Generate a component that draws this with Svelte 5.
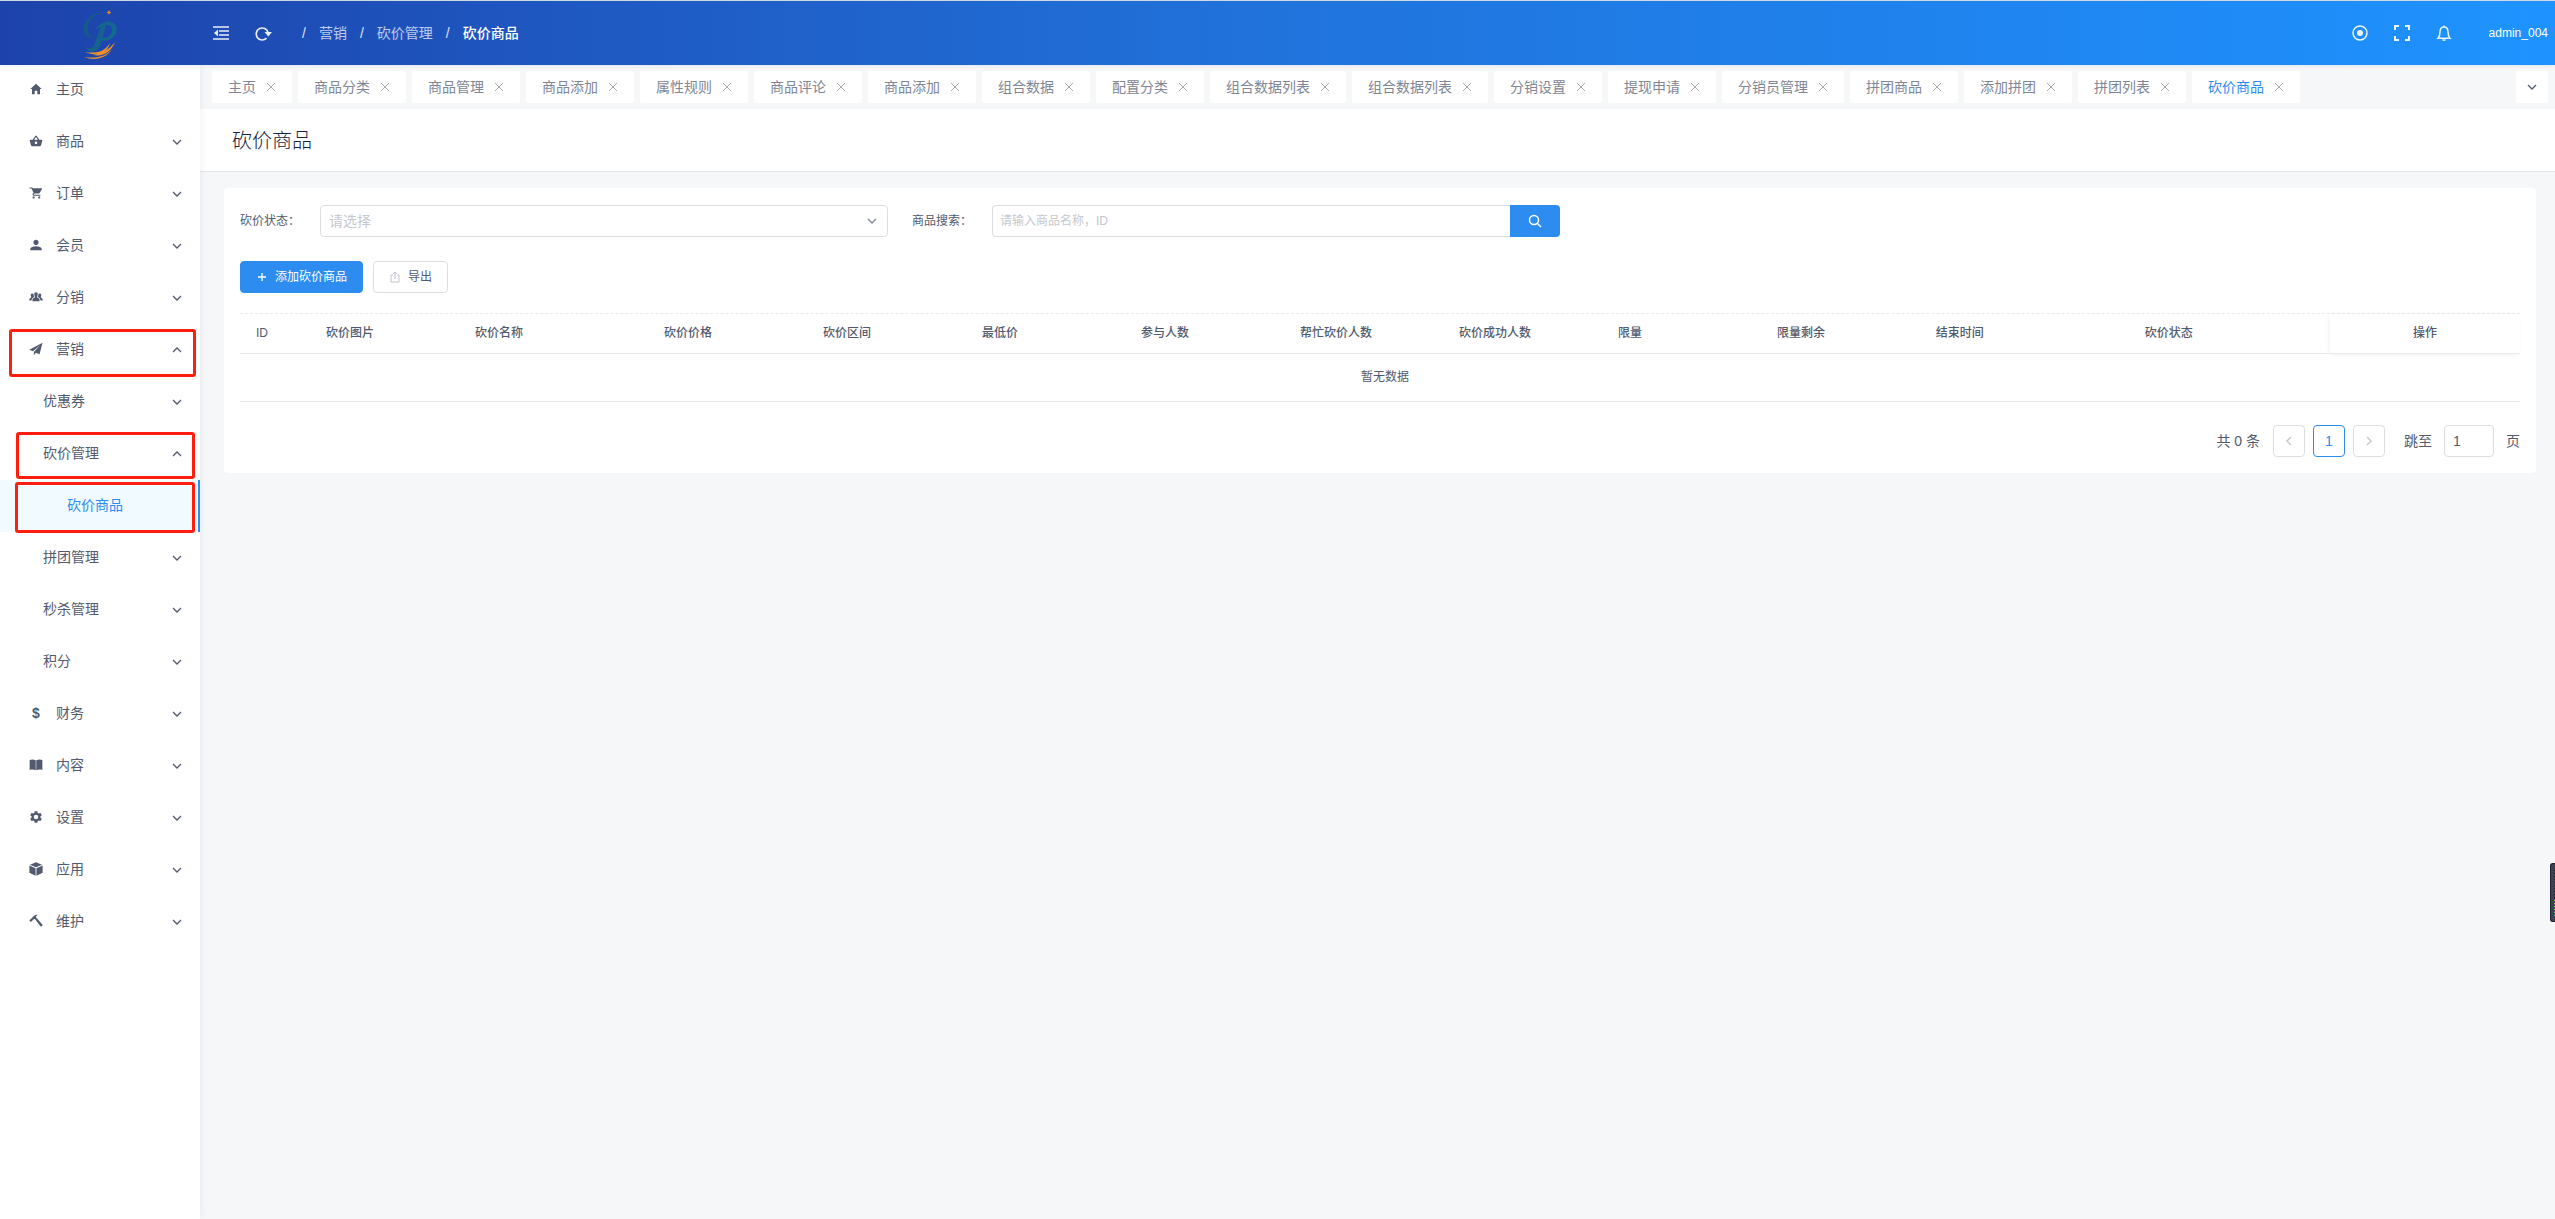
<script>
  const tabs = [
    '主页', '商品分类', '商品管理', '商品添加', '属性规则', '商品评论', '商品添加', '组合数据', '配置分类',
    '组合数据列表', '组合数据列表', '分销设置', '提现申请', '分销员管理', '拼团商品', '添加拼团', '拼团列表', '砍价商品'
  ];

  const menu = [
    { label: '主页', icon: 'home' },
    { label: '商品', icon: 'basket', arrow: 'down' },
    { label: '订单', icon: 'cart', arrow: 'down' },
    { label: '会员', icon: 'person', arrow: 'down' },
    { label: '分销', icon: 'people', arrow: 'down' },
    { label: '营销', icon: 'plane', arrow: 'up', mark: 'mark-a' },
    { label: '优惠券', level: 2, arrow: 'down' },
    { label: '砍价管理', level: 2, arrow: 'up', mark: 'mark-b' },
    { label: '砍价商品', level: 3, active: true, mark: 'mark-c' },
    { label: '拼团管理', level: 2, arrow: 'down' },
    { label: '秒杀管理', level: 2, arrow: 'down' },
    { label: '积分', level: 2, arrow: 'down' },
    { label: '财务', icon: 'dollar', arrow: 'down' },
    { label: '内容', icon: 'book', arrow: 'down' },
    { label: '设置', icon: 'gear', arrow: 'down' },
    { label: '应用', icon: 'cube', arrow: 'down' },
    { label: '维护', icon: 'hammer', arrow: 'down' }
  ];

  const icons = {
    home: 'M208 448V320h96v128h97.600V256H464L256 64 48 256h62.400v192z',
    basket:
      'M40 208h92L228 76q28-34 56 0l96 132h92q16 0 14 18l-40 180q-8 42-48 42H114q-40 0-48-42L26 226q-2-18 14-18zM186 208h140L256 112zM256 276a48 48 0 1 0 0 96 48 48 0 1 0 0-96z',
    cart:
      'M169.600 377.600a41.600 41.600 0 1 0 .1 0zM20 51.200v41.600h69.600l74.900 151.700-31.300 51c-3.100 5.200-5.200 12.400-5.200 19.700 0 27.800 19 41.600 44.800 41.600H416v-40H178c-3.100 0-5.200-2.100-5.200-5.200l23-38h155c15.600 0 29.100-8.300 36.400-21.800l90-140c1.200-2.500 2-6.200 2-10.400 0-11.400-9.300-19.700-20.800-19.700H135.400L115.600 51.200zM374.400 377.600a41.600 41.600 0 1 0 .1 0z',
    person:
      'M256 256c52.800 0 96-43.200 96-96s-43.200-96-96-96-96 43.200-96 96 43.200 96 96 96zm0 48c-63.600 0-208 32.400-208 96v48h416v-48c0-63.600-144.400-96-208-96z',
    people:
      'M256 84c44 0 66 32 62 78-3 40-18 68-24 88-4 20 10 36 40 46 40 14 54 40 54 112H124c0-72 14-98 54-112 30-10 44-26 40-46-6-20-21-48-24-88-4-46 18-78 62-78zM120 124c28 0 44 14 48 36 4 40 16 64 24 92-54 18-92 50-98 128H10c0-60 10-78 44-92 24-10 30-22 26-36-6-18-18-40-18-72 0-36 22-56 58-56zM392 124c-28 0-44 14-48 36-4 40-16 64-24 92 54 18 92 50 98 128h84c0-60-10-78-44-92-24-10-30-22-26-36 6-18 18-40 18-72 0-36-22-56-58-56z',
    plane:
      'M496 28L12 286l130 52L420 110 184 356l-12 128 84-92 130 58z',
    book:
      'M24 76c60-36 160-30 222 8v366c-62-30-160-36-222-8zM488 76c-60-36-160-30-222 8v366c62-30 160-36 222-8z',
    gear:
      'M414.600 276.900c.9-6.800 1.400-13.700 1.400-20.900s-.6-14.100-1.400-20.900l45-35.200c4-3.200 5.200-8.900 2.600-13.700l-42.700-73.800c-2.600-4.700-8.300-6.400-13-4.700l-53.100 21.300c-11.100-8.500-23-15.600-36-20.900l-8.100-56.500c-.7-5.100-5.200-9.200-10.500-9.200h-85.400c-5.300 0-9.800 4-10.500 9.200l-8.100 56.500c-13 5.300-25 12.600-36 20.900L105.700 107.700c-4.900-1.900-10.500 0-13 4.700L50 186.200c-2.700 4.700-1.500 10.500 2.600 13.700l45 35.200c-.9 6.800-1.500 13.900-1.500 20.900s.6 14.100 1.500 20.900l-45 35.200c-4.100 3.200-5.200 9-2.600 13.700l42.700 73.800c2.600 4.700 8.300 6.400 13 4.700l53.100-21.300c11.100 8.500 23 15.600 36 20.900l8.100 56.500c.7 5.100 5.200 9.200 10.500 9.200h85.400c5.300 0 9.800-4 10.500-9.200l8.100-56.500c13-5.300 25-12.600 36-20.900l53.100 21.300c4.900 1.900 10.500 0 13-4.700l42.700-73.800c2.600-4.700 1.500-10.500-2.600-13.700zM256 338a82 82 0 1 1 0-164 82 82 0 0 1 0 164z',
    cube:
      'M256 12L36 96l220 92 220-92zM14 130v262l226 108V224zM498 130v262L272 500V224z',
    hammer:
      'M12 236L186 62q60-50 124-34l-66 78 36 40 214 244q10 40-34 62-26 8-46-12L222 192l-28-20L66 290z'
  };

  const columns = [
    ['ID', 70], ['砍价图片', 149], ['砍价名称', 189], ['砍价价格', 159], ['砍价区间', 159], ['最低价', 159],
    ['参与人数', 159], ['帮忙砍价人数', 159], ['砍价成功人数', 159], ['限量', 159], ['限量剩余', 159],
    ['结束时间', 209], ['砍价状态', 201], ['操作', 190]
  ];
  const total = columns.reduce((sum, c) => sum + c[1], 0);

  let keyword = $state('');
  let page = $state('1');
</script>

{#snippet chevron(dir)}
  <svg class="chevron" class:up={dir === 'up'} viewBox="0 0 10 10" aria-hidden="true"><path d="M1 3l4 4 4-4" /></svg>
{/snippet}

<header class="topbar">
  <a class="brand" href="#home" aria-label="首页">
    <svg viewBox="0 0 40 54" aria-hidden="true">
      <path d="M25 6C12 6 3 15 3.500 24c.5 6 5 9 12 7-5 0-8-3-8-9C8 14 15 8 25 6z" fill="#175a8c" />
      <path d="M15 24c3-5 9-9 15-8 6 1 8 6 6 11-2 6-9 9-17 7l2-2c6 1 10-2 11-7 1-4-1-6-5-6-5 0-8 2-12 5z" fill="#126a90" />
      <path d="M23 17l5-3c-4 10-5 19-8 26-3 7-10 9-16 0 5 4 9 3 11-3 3-8 4-14 8-20z" fill="#15638e" />
      <path d="M5 46c13 2 20-1 25-9-3 11-13 14-25 9zM13 49c9-1 16-5 22-13-4 10-12 15-22 13zM4 51c14 2 22-1 28-8-6 10-18 12-28 8z" fill="#f09128" />
      <path d="M29 4l.8 1.700L31.500 6.500l-1.700.8L29 9l-.8-1.700-1.700-.8 1.700-.8z" fill="#f08a20" />
    </svg>
  </a>
  <button class="tool" aria-label="折叠菜单">
    <svg viewBox="0 0 16 16" aria-hidden="true"><path d="M0 2h16M6 6h10M6 10h10M0 14h16" stroke-width="1.600" /><path class="solid" d="M5 4.500v7L1 8z" /></svg>
  </button>
  <button class="tool" aria-label="刷新">
    <svg viewBox="0 0 16 16" aria-hidden="true"><path d="M11.500 13.200A6 6 0 1 1 13 7.500" stroke-width="1.700" /><path class="solid" d="M9.500 7H17l-3.600 4.500z" /></svg>
  </button>
  <nav class="crumbs" aria-label="面包屑">
    <span>/</span><a href="#marketing">营销</a><span>/</span><a href="#bargain">砍价管理</a><span>/</span><strong>砍价商品</strong>
  </nav>
  <div class="right">
    <button class="tool" aria-label="搜索">
      <svg viewBox="0 0 16 16" aria-hidden="true"><circle cx="8" cy="8" r="7" stroke-width="1.500" /><circle class="solid" cx="8" cy="8" r="3" /></svg>
    </button>
    <button class="tool" aria-label="全屏">
      <svg viewBox="0 0 16 16" aria-hidden="true"><path d="M1 5V1h4M11 1h4v4M15 11v4h-4M5 15H1v-4" stroke-width="2" /></svg>
    </button>
    <button class="tool" aria-label="通知">
      <svg viewBox="0 0 16 16" aria-hidden="true"><path d="M2 13.200h12c-1.500-1.500-2-3-2-6.200C12 4 10.500 2 8 2S4 4 4 7c0 3.200-.5 4.700-2 6.200zM8 .5V2M6.500 14.500q1.500 1.500 3 0" stroke-width="1.500" /></svg>
    </button>
    <a class="user" href="#user">admin_004</a>
  </div>
</header>

<div class="layout">
  <aside class="side">
    <ul>
      {#each menu as item}
        <li class:sub={item.level === 2} class:leaf={item.level === 3} class:active={item.active}>
          <a href="#menu">
            {#if item.icon === 'dollar'}
              <span class="glyph" aria-hidden="true">$</span>
            {:else if item.icon}
              <svg class="icon" viewBox="0 0 512 512" aria-hidden="true"><path fill-rule="evenodd" d={icons[item.icon]} /></svg>
            {/if}
            <span>{item.label}</span>
            {#if item.arrow}{@render chevron(item.arrow)}{/if}
          </a>
          {#if item.mark}<i class="mark {item.mark}"></i>{/if}
        </li>
      {/each}
    </ul>
  </aside>

  <main>
    <div class="tabs">
      {#each tabs as tab, i}
        <div class="tab" class:current={i === tabs.length - 1}>
          <a href="#tab">{tab}</a>
          <button aria-label="关闭{tab}"><svg viewBox="0 0 10 10" aria-hidden="true"><path d="M1 1l8 8M9 1l-8 8" /></svg></button>
        </div>
      {/each}
      <button class="more" aria-label="更多标签">{@render chevron('down')}</button>
    </div>

    <div class="title"><h1>砍价商品</h1></div>

    <section class="card">
      <form class="filters" onsubmit={(e) => e.preventDefault()}>
        <div class="field">
          <label for="state">砍价状态：</label>
          <div class="select">
            <select id="state"><option>请选择</option></select>
            {@render chevron('down')}
          </div>
        </div>
        <div class="field">
          <label for="keyword">商品搜索：</label>
          <div class="search">
            <input id="keyword" type="text" placeholder="请输入商品名称，ID" bind:value={keyword} />
            <button aria-label="查询">
              <svg viewBox="0 0 14 14" aria-hidden="true"><circle cx="6" cy="6" r="4.500" /><path d="M9 9l4 4" /></svg>
            </button>
          </div>
        </div>
      </form>

      <div class="actions">
        <button class="primary"><svg viewBox="0 0 10 10" aria-hidden="true"><path d="M5 1v8M1 5h8" /></svg>添加砍价商品</button>
        <button class="plain"><svg viewBox="0 0 10 12" aria-hidden="true"><path d="M3 4H1v7h8V4H7M5 8V1M3 3l2-2 2 2" /></svg>导出</button>
      </div>

      <div class="table">
        <table>
          <colgroup>
            {#each columns as col}<col style="width: {(col[1] / total) * 100}%" />{/each}
          </colgroup>
          <thead>
            <tr>{#each columns as col}<th scope="col">{col[0]}</th>{/each}</tr>
          </thead>
          <tbody>
            <tr><td colspan={columns.length}>暂无数据</td></tr>
          </tbody>
        </table>
      </div>

      <nav class="pager" aria-label="分页">
        <span class="count">共 0 条</span>
        <button disabled aria-label="上一页"><svg viewBox="0 0 8 10" aria-hidden="true"><path d="M6 1L2 5l4 4" /></svg></button>
        <button class="now">1</button>
        <button disabled aria-label="下一页"><svg viewBox="0 0 8 10" aria-hidden="true"><path d="M2 1l4 4-4 4" /></svg></button>
        <label for="page">跳至</label>
        <input id="page" type="text" bind:value={page} />
        <span>页</span>
      </nav>
    </section>
  </main>
</div>

<div class="meter" aria-hidden="true"></div>

<style>
  :global(body) {
    background: #f5f7f9;
    color: #515a6e;
    font: 14px/20px 'Liberation Sans', 'Noto Sans CJK SC', sans-serif;
  }
  :global(#app) {
    display: flex;
    flex-direction: column;
    min-height: 100vh;
  }
  * {
    box-sizing: border-box;
  }
  a {
    color: inherit;
    text-decoration: none;
  }
  button,
  input,
  select {
    margin: 0;
    padding: 0;
    border: 0;
    background: none;
    color: inherit;
    font: inherit;
  }
  svg {
    display: block;
    fill: none;
    stroke: currentColor;
  }

  .topbar {
    position: relative;
    z-index: 2;
    display: flex;
    align-items: center;
    height: 65px;
    padding-right: 7px;
    border-top: 1px solid #cfd9e2;
    background: linear-gradient(90deg, #1d42ab, #2173dc, #1e93ff);
    background-origin: border-box;
    background-clip: padding-box;
    box-shadow: 0 1px 4px rgba(0, 21, 41, 0.08);
    color: #fff;
  }
  .brand {
    width: 200px;
    padding-left: 80px;
  }
  .brand svg {
    width: 40px;
    height: 54px;
    stroke: none;
  }
  .tool {
    display: flex;
    align-items: center;
    justify-content: center;
    width: 42px;
    height: 64px;
    opacity: 0.9;
  }
  .tool svg {
    width: 16px;
    height: 16px;
    overflow: visible;
  }
  .solid {
    fill: currentColor;
    stroke: none;
  }
  .crumbs {
    display: flex;
    gap: 13px;
    margin-left: 18px;
  }
  .crumbs a,
  .crumbs span {
    opacity: 0.7;
  }
  .crumbs span {
    opacity: 0.85;
  }
  .crumbs strong {
    font-weight: 500;
  }
  .right {
    display: flex;
    align-items: center;
    margin-left: auto;
  }
  .user {
    margin-left: 24px;
    font-size: 12px;
    font-weight: 500;
  }

  .layout {
    display: flex;
    flex: 1;
  }
  .side {
    position: relative;
    z-index: 1;
    flex: none;
    width: 200px;
    background: #fff;
    box-shadow: 2px 0 8px rgba(29, 35, 41, 0.05);
  }
  ul {
    margin: -1px 0 0;
    padding: 0;
    list-style: none;
  }
  li {
    position: relative;
  }
  li a {
    display: flex;
    align-items: center;
    height: 52px;
    padding: 0 18px 3px 29px;
  }
  .sub a {
    padding-left: 43px;
  }
  .leaf a {
    padding-left: 67px;
  }
  .active a {
    border-right: 2px solid #2d8cf0;
    background: #f0faff;
    color: #2d8cf0;
  }
  .icon,
  .glyph {
    width: 14px;
    margin-right: 13px;
    font-weight: 700;
    text-align: center;
  }
  .icon {
    height: 14px;
    fill: currentColor;
    stroke: none;
  }
  .chevron {
    width: 10px;
    height: 10px;
    stroke-width: 1.3;
  }
  .chevron.up {
    transform: rotate(180deg);
  }
  li .chevron {
    margin: 3px 0 0 auto;
  }
  .mark {
    position: absolute;
    border: 3px solid #ff1d0d;
    border-radius: 3px;
  }
  .mark-a {
    inset: 5px 4px -1px 9px;
  }
  .mark-b {
    inset: 4px 5px 1px 16px;
  }
  .mark-c {
    inset: 2px 5px -1px 15px;
  }

  main {
    flex: 1;
    min-width: 0;
  }
  .tabs {
    display: flex;
    gap: 6px;
    padding: 6px 7px 6px 12px;
  }
  .tab {
    display: flex;
    align-items: center;
    height: 32px;
    padding: 0 16px;
    border-radius: 3px;
    background: #fff;
    color: #808695;
    white-space: nowrap;
  }
  .tab button {
    margin-left: 10px;
    color: #aaa;
  }
  .tab svg {
    width: 10px;
    height: 10px;
  }
  .tab.current a {
    color: #2d8cf0;
  }
  .more {
    display: flex;
    align-items: center;
    justify-content: center;
    width: 32px;
    height: 32px;
    margin-left: auto;
    border-radius: 3px;
    background: #fff;
  }
  .title {
    padding: 17px 32px 15px;
    border-bottom: 1px solid #e3e6ea;
    background: #fff;
  }
  h1 {
    margin: 0;
    color: #17233d;
    font-size: 20px;
    font-weight: 300;
    line-height: 30px;
  }

  .card {
    margin: 16px 19px 0 24px;
    padding: 17px 16px 16px;
    border-radius: 4px;
    background: #fff;
    font-size: 12px;
  }
  .filters {
    display: grid;
    grid-template-columns: repeat(24, 1fr);
    margin: 0 -12px;
  }
  .field {
    display: flex;
    align-items: center;
    grid-column: span 7;
    padding: 0 12px;
  }
  .field label {
    flex: none;
    width: 80px;
  }
  .select {
    display: grid;
    flex: 1;
    align-items: center;
  }
  .select > :global(*) {
    grid-area: 1 / 1;
  }
  select {
    appearance: none;
    width: 100%;
    height: 32px;
    padding: 0 8px;
    border: 1px solid #dcdee2;
    border-radius: 4px;
    color: #c5c8ce;
    font-size: 14px;
  }
  .select .chevron {
    justify-self: end;
    margin-right: 11px;
    color: #808695;
    pointer-events: none;
  }
  .search {
    display: flex;
    flex: 1;
  }
  .search input {
    flex: 1;
    height: 32px;
    padding: 0 7px;
    border: 1px solid #dcdee2;
    border-right: 0;
    border-radius: 4px 0 0 4px;
  }
  .search input::placeholder {
    color: #c5c8ce;
  }
  .search button {
    display: flex;
    align-items: center;
    justify-content: center;
    width: 50px;
    border-radius: 0 4px 4px 0;
    background: #2d8cf0;
    color: #fff;
  }
  .search svg {
    width: 14px;
    height: 14px;
    stroke-width: 1.5;
  }
  .actions {
    display: flex;
    gap: 10px;
    margin: 24px 0 20px;
  }
  .actions button {
    display: flex;
    align-items: center;
    height: 32px;
    padding: 0 15px;
    border: 1px solid #dcdee2;
    border-radius: 4px;
  }
  .actions svg {
    width: 10px;
    height: 10px;
    margin: 0 8px 0 1px;
  }
  .actions .primary {
    border-color: #2d8cf0;
    background: #2d8cf0;
    color: #fff;
  }
  .primary svg {
    stroke-width: 1.3;
  }
  .plain path {
    stroke: #bfc3ca;
  }
  .actions .plain svg {
    height: 12px;
  }

  .table {
    border-top: 1px dashed #e8eaec;
  }
  table {
    width: 100%;
    border-spacing: 0;
    table-layout: fixed;
  }
  th {
    height: 40px;
    padding: 0 16px 2px;
    border-bottom: 1px solid #e8eaec;
    font-weight: 500;
    text-align: left;
    white-space: nowrap;
  }
  th:last-child {
    box-shadow: -2px 0 6px -2px rgba(0, 0, 0, 0.08), 0 3px 6px -3px rgba(0, 0, 0, 0.06);
    text-align: center;
  }
  td {
    height: 48px;
    padding: 0 0 2px 10px;
    border-bottom: 1px solid #e8eaec;
    text-align: center;
  }

  .pager {
    display: flex;
    align-items: center;
    justify-content: flex-end;
    gap: 8px;
    margin-top: 23px;
    font-size: 14px;
  }
  .count {
    margin-right: 5px;
  }
  .pager button {
    display: flex;
    align-items: center;
    justify-content: center;
    width: 32px;
    height: 32px;
    border: 1px solid #dcdee2;
    border-radius: 4px;
    color: #c5c8ce;
  }
  .pager button.now {
    border-color: #2d8cf0;
    color: #2d8cf0;
  }
  .pager svg {
    width: 8px;
    height: 10px;
    stroke-width: 1.5;
  }
  .pager label {
    margin-left: 11px;
  }
  .pager input {
    width: 50px;
    height: 32px;
    margin: 0 4px;
    padding: 0 8px;
    border: 1px solid #dcdee2;
    border-radius: 4px;
  }

  .meter {
    position: fixed;
    right: 0;
    bottom: 297px;
    width: 5px;
    height: 59px;
    border: 1px solid #20222e;
    border-right: 0;
    border-radius: 3px 0 0 3px;
    background:
      repeating-linear-gradient(transparent 0 1px, #3d4252 1px 3px) 3px 6px / 1px 46px no-repeat,
      linear-gradient(#181a22 62%, #9fe04a 62%, #2fe6c0) 3px 6px / 1px 46px no-repeat,
      #3d4252;
  }
</style>
